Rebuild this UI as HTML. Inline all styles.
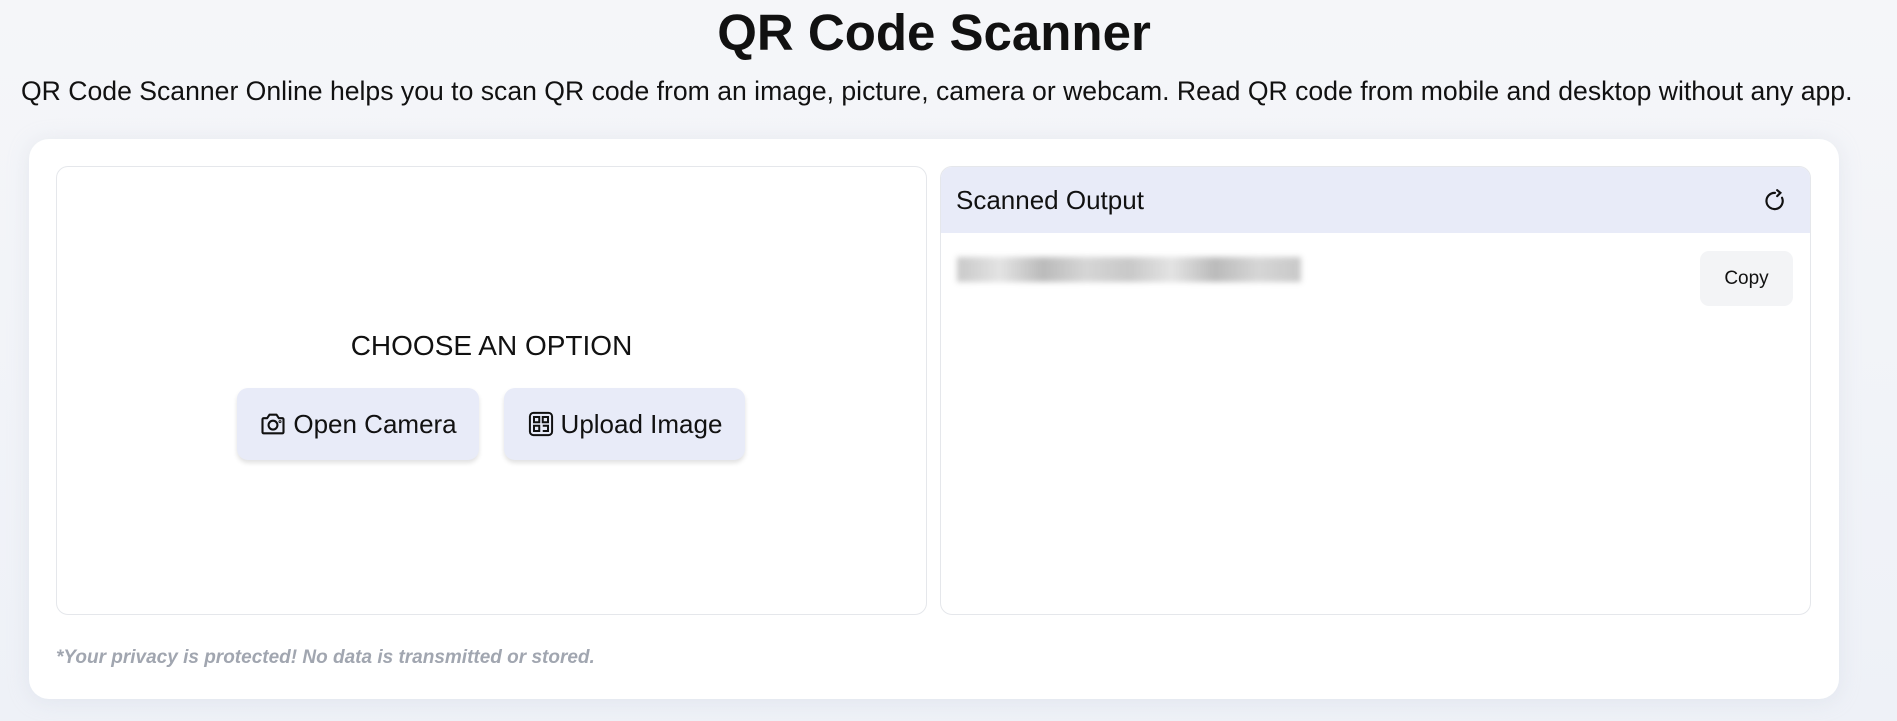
<!DOCTYPE html>
<html><head><meta charset="utf-8"><style>
*{box-sizing:border-box;margin:0;padding:0}
body{width:1897px;height:721px;overflow:hidden;background:linear-gradient(180deg,#f5f6f9 0%,#eef1f7 100%);font-family:"Liberation Sans",Arial,sans-serif;color:#111;position:relative}
h1{position:absolute;top:2px;left:0;width:1868px;text-align:center;font-size:51px;font-weight:700;line-height:62px}
.sub{position:absolute;top:75px;left:21px;font-size:26.6px;line-height:32px;white-space:nowrap}
.card{position:absolute;left:29px;top:139px;width:1810px;height:560px;background:#fff;border-radius:20px;box-shadow:0 2px 20px rgba(200,205,220,.35)}
.left{position:absolute;left:56px;top:166px;width:871px;height:449px;border:1px solid #e5e7eb;border-radius:12px}
.choose{position:absolute;left:56px;width:871px;top:328px;text-align:center;font-size:28px;font-weight:500;line-height:36px}
.btn{position:absolute;top:388px;height:72px;background:#e8ebf8;border-radius:11px;box-shadow:0 3px 5px rgba(0,0,0,.12);font-size:26px;display:flex;align-items:center;justify-content:center;gap:6px}
.right{position:absolute;left:940px;top:166px;width:871px;height:449px;border:1px solid #e5e7eb;border-radius:12px;overflow:hidden}
.hdr{height:66px;background:#e8ebf8;display:flex;align-items:center;padding-left:15px;font-size:26px;position:relative}
.blur{position:absolute;left:16px;top:90px;width:344px;height:25px;background:linear-gradient(90deg,#bbb,#ddd,#aaa,#ccc,#bbb,#ddd,#aaa,#ccc,#bbb);filter:blur(3px);opacity:.8}
.copy{position:absolute;left:759px;top:84px;width:93px;height:55px;background:#f3f4f6;border-radius:9px;font-size:19px;display:flex;align-items:center;justify-content:center}
.priv{position:absolute;left:56px;top:647px;font-size:19px;font-style:italic;font-weight:700;color:#a1a6b0}
</style></head><body>
<h1>QR Code Scanner</h1>
<div class="sub">QR Code Scanner Online helps you to scan QR code from an image, picture, camera or webcam. Read QR code from mobile and desktop without any app.</div>
<div class="card"></div>
<div class="left"></div>
<div class="choose">CHOOSE AN OPTION</div>
<div class="btn" style="left:237px;width:242px">
<svg width="28" height="28" viewBox="0 0 24 24" fill="none" stroke="#111" stroke-width="1.8" stroke-linejoin="round"><path d="M3 8a1 1 0 0 1 1-1h3l2-3h6l2 3h3a1 1 0 0 1 1 1v11a1 1 0 0 1-1 1H4a1 1 0 0 1-1-1z"/><circle cx="12" cy="13" r="3.8"/><circle cx="18" cy="10" r=".4"/></svg>Open Camera</div>
<div class="btn" style="left:504px;width:241px">
<svg width="28" height="28" viewBox="0 0 24 24" fill="none" stroke="#111" stroke-width="1.7"><rect x="2.5" y="2.5" width="19" height="19" rx="3"/><rect x="6" y="6" width="4.5" height="4.5"/><rect x="13.5" y="6" width="4.5" height="4.5"/><rect x="6" y="13.5" width="4.5" height="4.5"/><path d="M13.5 13.5h4.5v4.5h-4.5"/></svg>Upload Image</div>
<div class="right"><div class="hdr">Scanned Output
<svg style="position:absolute;right:22px;top:21px" width="26" height="26" viewBox="0 0 24 24" fill="none" stroke="#111" stroke-width="2" stroke-linecap="round"><path d="M18.5 9A7.5 7.5 0 1 1 12 4.5"/><path d="M14 2l3 2.5-3 3"/></svg></div>
<div class="blur"></div>
<div class="copy">Copy</div>
</div>
<div class="priv">*Your privacy is protected! No data is transmitted or stored.</div>
</body></html>
